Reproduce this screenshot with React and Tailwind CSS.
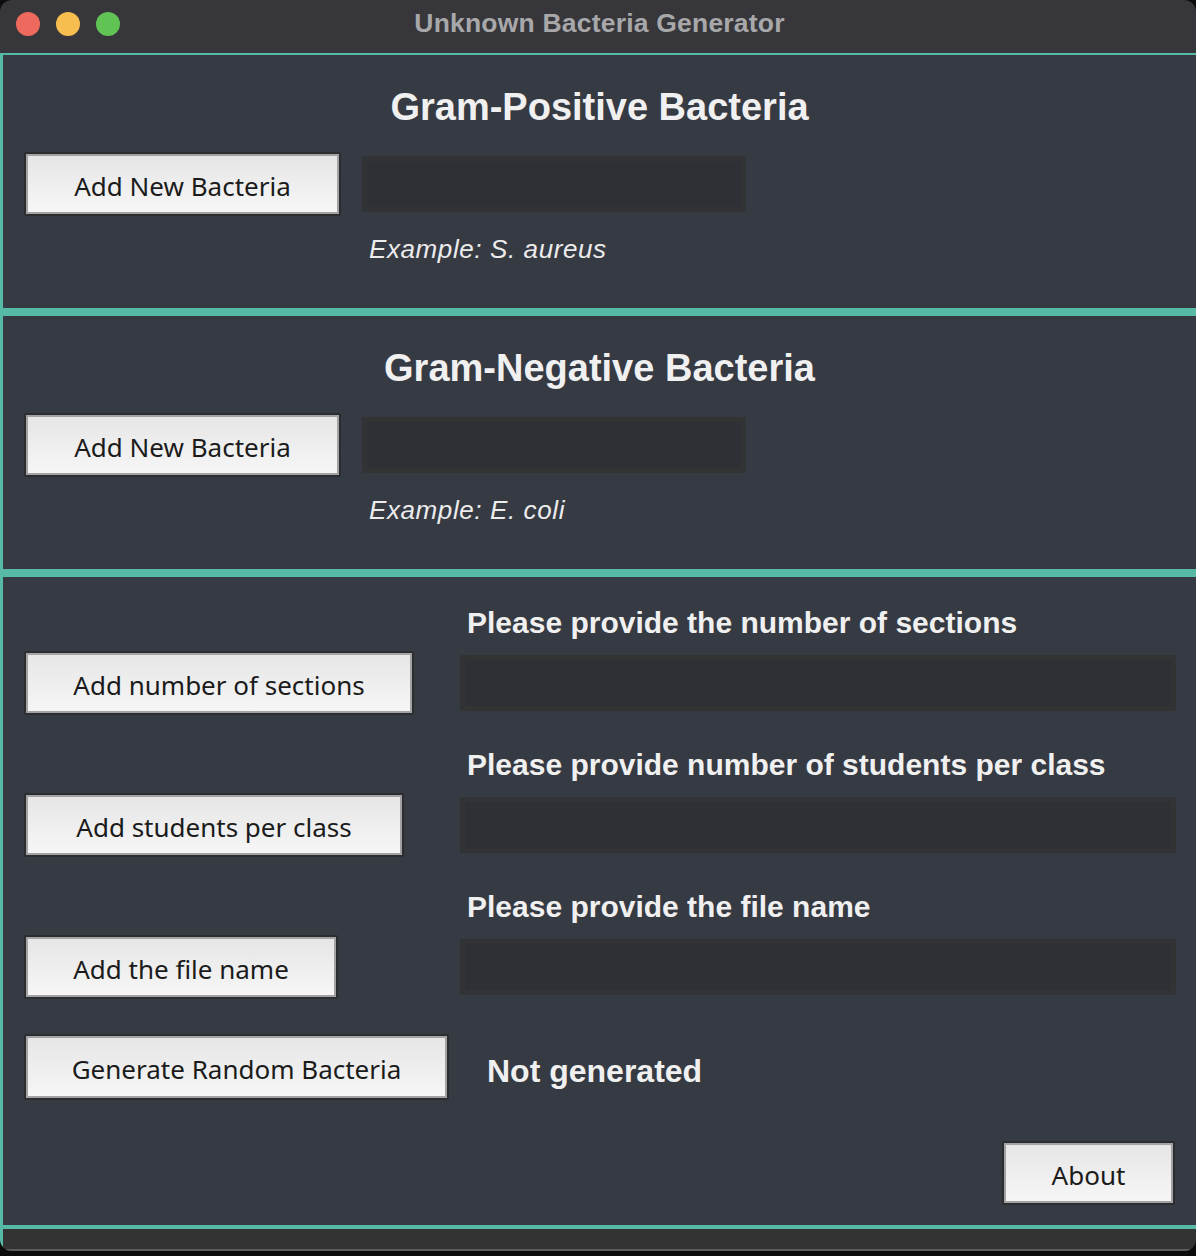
import React from 'react'

const SANS = { fontFamily: '"Liberation Sans", Arial, sans-serif' }

function MacButton({ width, height = 'h-[64px]', children }) {
  return (
    <div className={`${width} ${height} flex-shrink-0 rounded-[2px] bg-[#2b2d31] p-[2px]`}>
      <div className="h-full w-full border-2 border-[#a3a3a3] bg-gradient-to-b from-[#e6e6e6] to-[#f6f6f6] flex items-center justify-center pt-[4px] text-[26px] text-[#1b1b1b] whitespace-nowrap" style={{ fontFamily: '"Noto Sans", "DejaVu Sans", sans-serif' }}>
        {children}
      </div>
    </div>
  )
}

function Field({ width }) {
  return <div className={`${width} h-[56px] border-[5px] border-[#323335] bg-[#2d3035]`} />
}

function BacteriaSection({ title, example }) {
  return (
    <section className="h-[253px] pt-[30px]">
      <h2 className="text-center text-[38px] leading-[44px] font-bold text-[#f0f0f0]">{title}</h2>
      <div className="mt-[23px] pl-[21px] flex items-center gap-[21px]">
        <MacButton width="w-[317px]">Add New Bacteria</MacButton>
        <Field width="w-[384px]" />
      </div>
      <p className="mt-[17px] ml-[366px] text-[26px] leading-[32px] italic tracking-[0.6px] text-[#ececec]">{example}</p>
    </section>
  )
}

function InputRow({ label, button, width, className = '' }) {
  return (
    <div className={`flex items-end ${className}`}>
      <div className="w-[436px] flex-shrink-0">
        <MacButton width={width}>{button}</MacButton>
      </div>
      <div className="flex-1 pr-[20px]">
        <div className="pl-[7px] text-[30px] leading-[36px] font-bold text-[#f0f0f0] whitespace-nowrap">{label}</div>
        <div className="mt-[10px] h-[64px] flex items-center">
          <Field width="w-full" />
        </div>
      </div>
    </div>
  )
}

export default function App() {
  return (
    <div className="w-[1196px] h-[1256px] bg-[#0c0c0d] overflow-hidden" style={SANS}>
      <div className="h-[1251px] flex flex-col rounded-[12px] overflow-hidden">
        {/* title bar */}
        <div className="relative h-[53px] flex-shrink-0 bg-[#37373b] flex items-center justify-center pb-[6px]">
          <div className="absolute left-[16px] top-[12px] flex gap-[16px]">
            <span className="w-[24px] h-[24px] rounded-full bg-[#ee6a5f]" />
            <span className="w-[24px] h-[24px] rounded-full bg-[#f5be4f]" />
            <span className="w-[24px] h-[24px] rounded-full bg-[#5fc454]" />
          </div>
          <span className="ml-[3px] text-[26.5px] font-bold text-[#a8a8aa] tracking-[0.2px]">Unknown Bacteria Generator</span>
        </div>

        {/* content */}
        <div className="flex-1 flex flex-col border-t-2 border-l-[3px] border-[#57baa6] bg-[#363a43]">
          <BacteriaSection title="Gram-Positive Bacteria" example="Example: S. aureus" />
          <div className="h-[8px] bg-[#57baa6]" />
          <BacteriaSection title="Gram-Negative Bacteria" example="Example: E. coli" />
          <div className="h-[8px] bg-[#57baa6]" />

          <section className="h-[648px] pt-[28px] pl-[21px]">
            <InputRow label="Please provide the number of sections" button="Add number of sections" width="w-[390px]" />
            <InputRow className="mt-[32px]" label="Please provide number of students per class" button="Add students per class" width="w-[380px]" />
            <InputRow className="mt-[32px]" label="Please provide the file name" button="Add the file name" width="w-[314px]" />

            <div className="mt-[35px] flex items-center">
              <MacButton width="w-[425px]" height="h-[66px]">Generate Random Bacteria</MacButton>
              <span className="ml-[38px] mt-[8px] text-[32px] font-bold text-[#f0f0f0]">Not generated</span>
            </div>

            <div className="mt-[41px] flex justify-end pr-[21px]">
              <MacButton width="w-[173px]">About</MacButton>
            </div>
          </section>
          <div className="h-[4px] bg-[#57baa6]" />
          <div className="flex-1 bg-[#333333] border-b-2 border-[#5c5c5c]" />
        </div>
      </div>
    </div>
  )
}
